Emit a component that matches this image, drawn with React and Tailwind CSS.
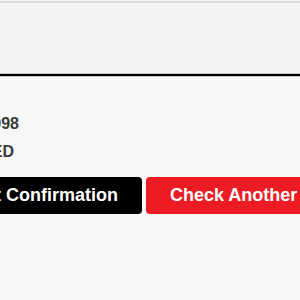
import React from 'react';

export default function App() {
  return (
    <div className="w-[300px] h-[300px] overflow-hidden bg-[#f7f7f7] font-['Liberation_Sans',Arial,sans-serif]">
      <div className="mt-px border-t-2 border-[#dcdcdc] h-[72px] bg-[#f4f4f4]" />
      <div className="border-t border-b border-[#c8c8c8]">
        <div className="h-[2px] bg-black" />
      </div>
      <div className="ml-[-64px] pt-[38px]">
        <div className="flex justify-end w-[83px] whitespace-nowrap text-[16px] leading-[18px] font-bold text-[#3a3a3a]">
          <span className="shrink-0">Order #: 4410998</span>
        </div>
        <div className="flex justify-end mt-[10px] w-[78px] whitespace-nowrap text-[16px] leading-[18px] font-bold text-[#3a3a3a]">
          <span className="shrink-0">Status: CONFIRMED</span>
        </div>
        <div className="flex gap-[4px] mt-[16px] whitespace-nowrap">
          <button className="shrink-0 h-[37px] px-6 rounded bg-black text-white font-bold text-[18px]">
            Print Confirmation
          </button>
          <button className="shrink-0 h-[37px] px-6 rounded bg-[#ed1c24] text-white font-bold text-[18px]">
            Check Another
          </button>
        </div>
      </div>
    </div>
  );
}
